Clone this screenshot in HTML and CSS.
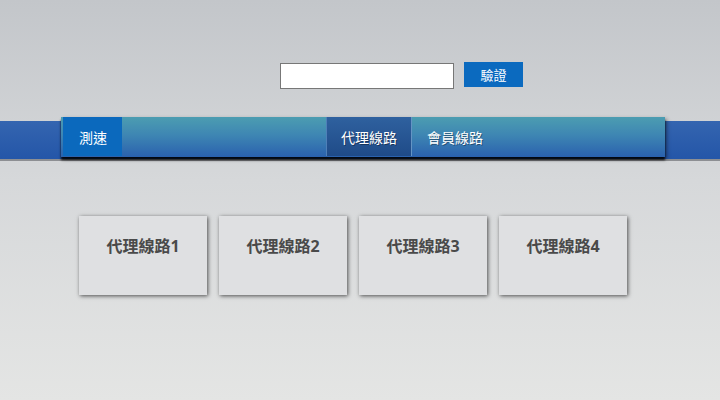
FILE: index.html
```html
<!DOCTYPE html>
<html lang="zh-Hant">
<head>
<meta charset="utf-8">
<title>線路</title>
<link rel="stylesheet" href="styles.css">
</head>
<body>
<div class="page">
  <form class="verify">
    <input class="code" type="text">
    <button class="btn" type="button">驗證</button>
  </form>
  <div class="band">
    <nav class="nav">
      <a class="item speed">測速</a>
      <a class="item active">代理線路</a>
      <a class="item">會員線路</a>
    </nav>
  </div>
  <div class="cards">
    <div class="card">代理線路1</div>
    <div class="card">代理線路2</div>
    <div class="card">代理線路3</div>
    <div class="card">代理線路4</div>
  </div>
</div>
</body>
</html>
```
FILE: styles.css
```css
html, body {
  margin: 0;
  padding: 0;
}
body {
  width: 720px;
  height: 400px;
  overflow: hidden;
  background: linear-gradient(to bottom, #c3c6ca 0%, #d6d8da 45%, #e4e5e4 100%);
  font-family: "Open Sans", "Noto Sans CJK TC", sans-serif;
}
.page {
  display: flex;
  flex-direction: column;
}
.verify {
  display: flex;
  align-items: flex-start;
  margin: 62px 0 0 280px;
  height: 27px;
}
.code {
  box-sizing: border-box;
  width: 174px;
  height: 26px;
  margin: 1px 0 0 0;
  border: 1px solid #777;
  background: #fff;
  padding: 0 4px;
}
.btn {
  box-sizing: border-box;
  width: 59px;
  height: 25px;
  margin-left: 10px;
  border: none;
  background: #0b6abf;
  color: #fff;
  font-family: "Noto Sans CJK TC", sans-serif;
  font-size: 13px;
  padding: 0;
}
.band {
  margin-top: 32px;
  height: 38px;
  background: linear-gradient(to bottom, #3465b0, #2456a8);
  box-shadow: 0 2px 0 #8d8f93;
  display: flex;
}
.nav {
  box-sizing: border-box;
  margin: -4px 0 0 61px;
  width: 604px;
  height: 40px;
  padding: 0 0 1px 2px;
  display: flex;
  background: linear-gradient(to bottom, #4c9db1 0%, #3e86b3 45%, #2a61ae 100%);
  box-shadow: 0 3px 2px rgba(0, 0, 0, 0.85), 2px 2px 4px rgba(0, 0, 0, 0.4);
}
.item {
  display: flex;
  align-items: center;
  height: 39px;
  padding: 0 15px;
  color: #fff;
  font-family: "Noto Sans CJK TC", sans-serif;
  font-size: 14px;
  white-space: nowrap;
  text-shadow: 1px 1px 0 rgba(0, 0, 0, 0.35);
}
.speed {
  width: 59px;
  box-sizing: border-box;
  padding-left: 16px;
  background: #0b69bd;
  text-shadow: none;
}
.active {
  margin-left: 204px;
  padding: 0 14px;
  background: linear-gradient(to bottom, #2f619f, #1f4b88);
  border-left: 1px solid #4f7fb8;
  border-right: 1px solid #6494c4;
}
.cards {
  display: flex;
  gap: 12px;
  margin: 57px 0 0 79px;
}
.card {
  width: 128px;
  height: 79px;
  box-sizing: border-box;
  background: #dfe0e2;
  box-shadow: 1px 1px 4px rgba(0, 0, 0, 0.65);
  text-align: center;
  padding-top: 17px;
  font-size: 16px;
  font-weight: bold;
  color: #4a4a4a;
}
```
